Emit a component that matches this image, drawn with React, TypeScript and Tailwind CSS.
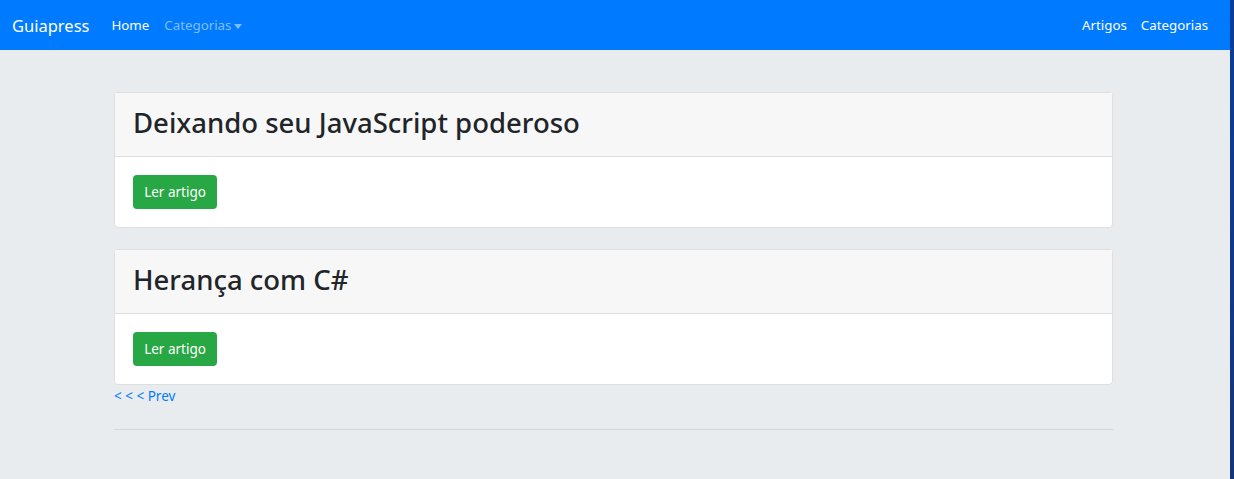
import React from "react";

const font = { fontFamily: '"Noto Sans", "Open Sans", Arial, sans-serif' };

function Caret() {
  return (
    <span className="ml-[3px] inline-block h-0 w-0 border-x-[4.5px] border-t-[5px] border-x-transparent border-t-[#80bdff] align-[2px]" />
  );
}

function ArticleCard({ title }: { title: string }) {
  return (
    <div className="rounded-[4px] border border-[#dfdfdf] bg-white">
      <div className="flex h-[64px] items-center border-b border-[#dfdfdf] bg-[#f7f7f7] px-[18px] pb-[4px]">
        <h2 className="text-[27.5px] leading-[1.2] font-medium text-[#212529]">{title}</h2>
      </div>
      <div className="p-[18px]">
        <a
          href="#"
          className="flex h-[34px] w-[84px] items-center justify-center rounded-[4px] bg-[#28a745] text-[13.5px] text-white"
        >
          Ler artigo
        </a>
      </div>
    </div>
  );
}

export default function App() {
  return (
    <div className="flex h-[479px] w-[1234px] overflow-hidden" style={font}>
      <div className="flex w-[1230px] flex-col bg-[#e9ecef]">
        <nav className="flex h-[50px] items-center bg-[#007bff] pl-[12px] pr-[22px] pt-[2px] text-[13.3px]">
          <a href="#" className="mr-[22px] text-[16.5px] text-white">
            Guiapress
          </a>
          <a href="#" className="mr-[15px] text-white">
            Home
          </a>
          <a href="#" className="flex items-center text-[#80bdff]">
            Categorias
            <Caret />
          </a>
          <div className="ml-auto flex gap-[14px]">
            <a href="#" className="text-white">
              Artigos
            </a>
            <a href="#" className="text-white">
              Categorias
            </a>
          </div>
        </nav>
        <main className="ml-[114px] mt-[42px] w-[999px]">
          <ArticleCard title="Deixando seu JavaScript poderoso" />
          <div className="h-[21px]" />
          <ArticleCard title="Herança com C#" />
          <a href="#" className="mt-[1px] block text-[13.5px] leading-[20px] text-[#007bff]">
            {"< < < Prev"}
          </a>
          <hr className="mt-[23px] border-t border-[#d3d6da]" />
        </main>
      </div>
      <div className="w-[4px] bg-gradient-to-b from-[#0a3d99] to-[#15357a]" />
    </div>
  );
}
